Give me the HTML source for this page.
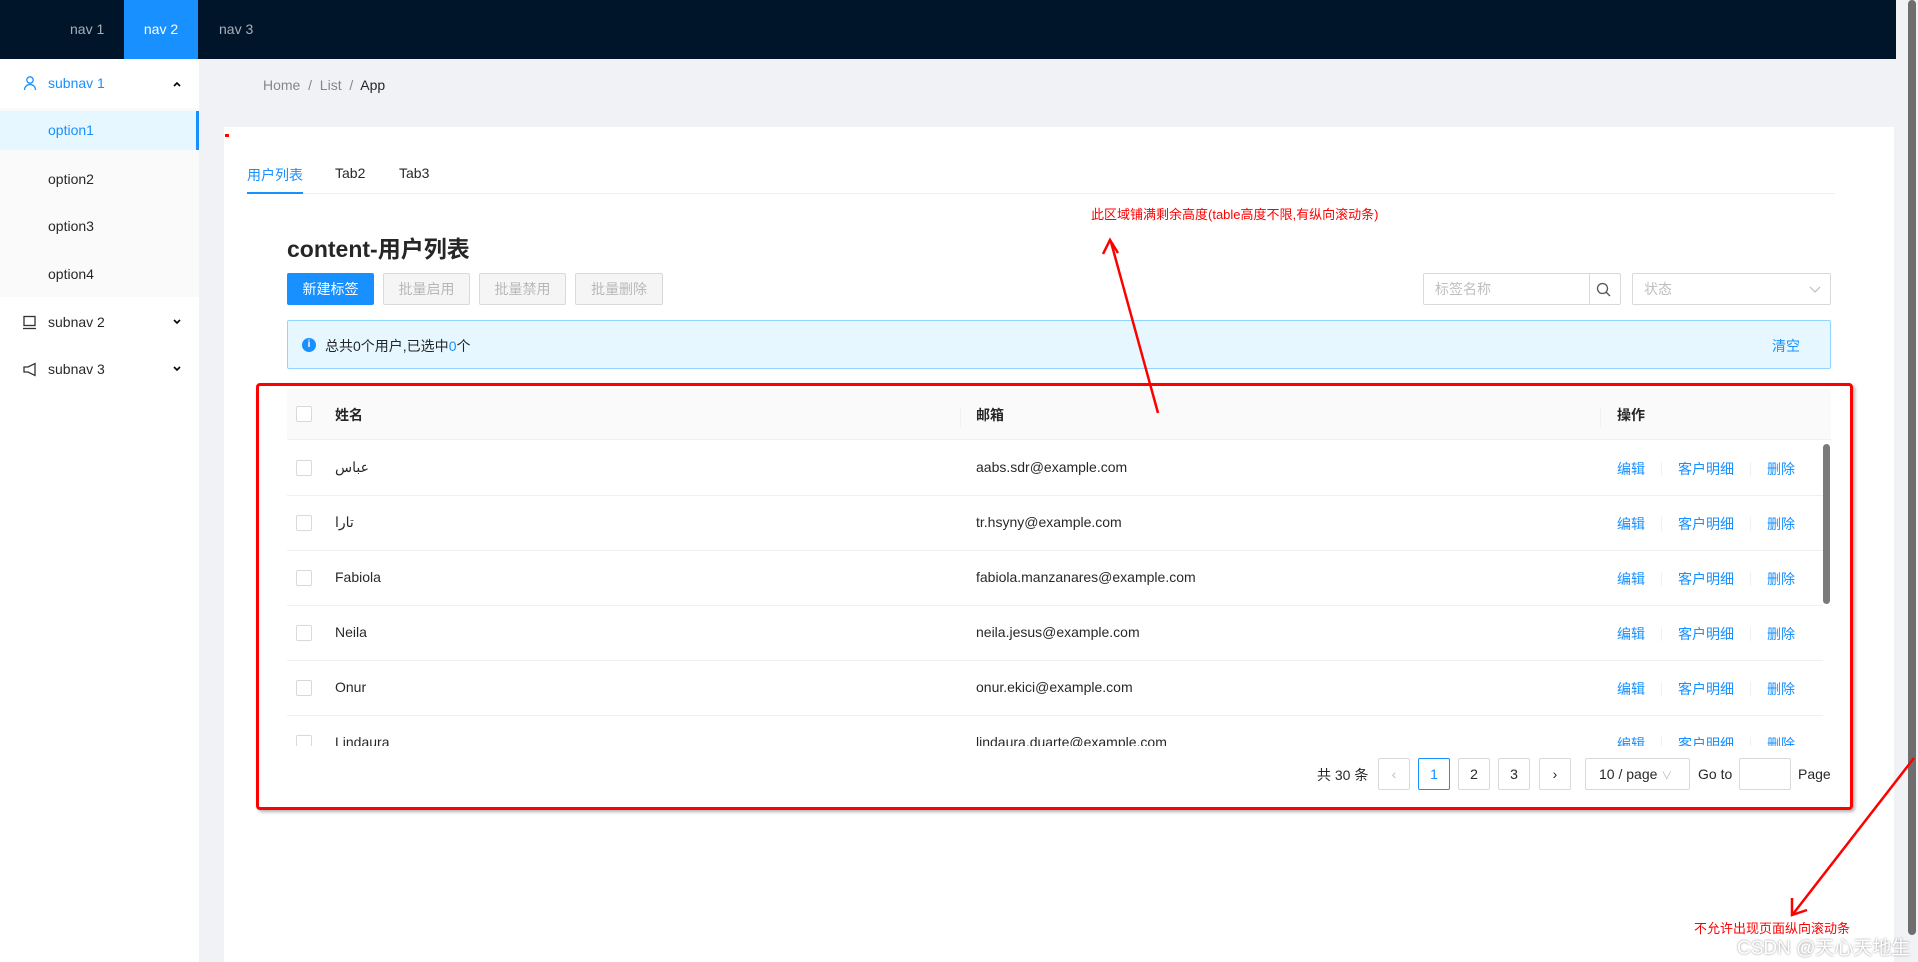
<!DOCTYPE html><html><head><meta charset="utf-8"><style>
*{box-sizing:border-box;margin:0;padding:0}
body{width:1918px;height:962px;overflow:hidden;position:relative;background:#f0f2f5;font-family:"Liberation Sans","Noto Sans CJK SC",sans-serif;font-size:14px;color:rgba(0,0,0,.85)}
.a{position:absolute}
.nav{left:0;top:0;width:1918px;height:59px;background:#001529}
.nav span{position:absolute;top:0;height:59px;line-height:59px;color:rgba(255,255,255,.65)}
.side{left:0;top:59px;width:199px;height:903px;background:#fff}
.mi{position:absolute;left:0;width:199px;height:48px;line-height:48px;padding-left:48px}
.btn{position:absolute;top:273px;height:32px;line-height:30px;text-align:center;border:1px solid #d9d9d9;background:#f5f5f5;color:rgba(0,0,0,.25);border-radius:2px}
.row{position:absolute;left:287px;width:1536px;height:55px;border-bottom:1px solid #f0f0f0}
.cb{position:absolute;left:9px;width:16px;height:16px;border:1px solid #d9d9d9;border-radius:2px;background:#fff}
.row span{position:absolute}
.lk{color:#1890ff}
.sep{position:absolute;width:1px;height:14px;background:#f0f0f0}
.pg{position:absolute;top:758px;height:32px;border:1px solid #d9d9d9;border-radius:2px;text-align:center;line-height:30px;background:#fff}
.red{color:#f00}
</style></head><body>
<div class="a nav"><span style="left:70px">nav 1</span><span style="left:124px;width:74px;background:#1890ff;color:#fff;text-align:center">nav 2</span><span style="left:219px">nav 3</span></div>
<div class="a side">
<div class="a" style="left:0;top:49px;width:199px;height:189px;background:#fafafa"></div>
<div class="mi" style="top:0;color:#1890ff">subnav 1</div>
<svg class="a" style="left:22px;top:16px" width="16" height="16" viewBox="0 0 16 16" fill="none" stroke="#1890ff" stroke-width="1.3"><circle cx="8" cy="5" r="3.2"/><path d="M2.5 15c0-3.5 2.5-5.5 5.5-5.5s5.5 2 5.5 5.5"/></svg>
<svg class="a" style="left:172px;top:21px" width="10" height="8" viewBox="0 0 10 8" fill="none" stroke="#000" stroke-width="1.6"><path d="M2 6l3-3 3 3"/></svg>
<div class="mi" style="top:52px;height:39px;line-height:39px;background:#e6f7ff;color:#1890ff;border-right:3px solid #1890ff">option1</div>
<div class="mi" style="top:100px;height:40px;line-height:40px">option2</div>
<div class="mi" style="top:147px;height:40px;line-height:40px">option3</div>
<div class="mi" style="top:195px;height:40px;line-height:40px">option4</div>
<div class="mi" style="top:239px">subnav 2</div>
<svg class="a" style="left:22px;top:256px" width="15" height="15" viewBox="0 0 15 15" fill="none" stroke="#333" stroke-width="1.3"><rect x="2" y="1.5" width="11" height="9"/><path d="M1 13.5h13"/></svg>
<svg class="a" style="left:172px;top:259px" width="10" height="8" viewBox="0 0 10 8" fill="none" stroke="#000" stroke-width="1.6"><path d="M2 2l3 3 3-3"/></svg>
<div class="mi" style="top:286px">subnav 3</div>
<svg class="a" style="left:22px;top:303px" width="15" height="15" viewBox="0 0 15 15" fill="none" stroke="#333" stroke-width="1.3"><path d="M13 1.5v12L6 10H2V5h4z"/></svg>
<svg class="a" style="left:172px;top:306px" width="10" height="8" viewBox="0 0 10 8" fill="none" stroke="#000" stroke-width="1.6"><path d="M2 2l3 3 3-3"/></svg>
</div>
<div class="a" style="left:263px;top:77px;color:rgba(0,0,0,.45)">Home &nbsp;/&nbsp; List &nbsp;/&nbsp; <span style="color:rgba(0,0,0,.85)">App</span></div>
<div class="a" style="left:224px;top:127px;width:1670px;height:835px;background:#fff"></div>
<div class="a" style="left:225px;top:134px;width:4px;height:3px;background:#f00"></div>
<div class="a" style="left:1896px;top:0;width:22px;height:962px;background:#f0f2f5"></div>
<div class="a" style="left:1908px;top:0;width:8px;height:935px;background:#6e6e6e;border-radius:4px"></div>
<div class="a" style="left:247px;top:165px;color:#1890ff">用户列表</div>
<div class="a" style="left:335px;top:165px">Tab2</div>
<div class="a" style="left:399px;top:165px">Tab3</div>
<div class="a" style="left:247px;top:193px;width:1588px;height:1px;background:#f0f0f0"></div>
<div class="a" style="left:247px;top:192px;width:56px;height:2px;background:#1890ff"></div>
<div class="a red" style="left:1091px;top:204px;font-size:13px">此区域铺满剩余高度(table高度不限,有纵向滚动条)</div>
<div class="a" style="left:287px;top:230px;font-size:23px;font-weight:bold">content-用户列表</div>
<div class="btn" style="left:287px;width:87px;background:#1890ff;border-color:#1890ff;color:#fff">新建标签</div>
<div class="btn" style="left:383px;width:87px">批量启用</div>
<div class="btn" style="left:479px;width:87px">批量禁用</div>
<div class="btn" style="left:575px;width:88px">批量删除</div>
<div class="a" style="left:1423px;top:273px;width:198px;height:32px;border:1px solid #d9d9d9;border-radius:2px;color:#bfbfbf;line-height:30px;padding-left:11px">标签名称<div class="a" style="left:165px;top:-1px;width:32px;height:32px;border-left:1px solid #d9d9d9"></div>
<svg class="a" style="left:172px;top:8px" width="15" height="15" viewBox="0 0 15 15" fill="none" stroke="#555" stroke-width="1.3"><circle cx="6.5" cy="6.5" r="5"/><path d="M10 10l4 4"/></svg></div>
<div class="a" style="left:1632px;top:273px;width:199px;height:32px;border:1px solid #d9d9d9;border-radius:2px;color:#bfbfbf;line-height:30px;padding-left:11px">状态
<svg class="a" style="left:176px;top:12px" width="12" height="8" viewBox="0 0 12 8" fill="none" stroke="#bfbfbf" stroke-width="1.2"><path d="M1 1l5 5 5-5"/></svg></div>
<div class="a" style="left:287px;top:320px;width:1544px;height:49px;background:#e6f7ff;border:1px solid #91d5ff;border-radius:2px"></div>
<div class="a" style="left:302px;top:338px;width:14px;height:14px;border-radius:50%;background:#1890ff;color:#fff;font-size:10px;line-height:14px;text-align:center;font-weight:bold">i</div>
<div class="a" style="left:325px;top:336px">总共0个用户,已选中<span style="color:#1890ff">0</span>个</div>
<div class="a lk" style="left:1772px;top:336px">清空</div>
<div class="a" style="left:256px;top:383px;width:1597px;height:427px;border:3px solid #f00;border-radius:4px;box-shadow:2px 2px 3px rgba(0,0,0,.3)"></div>
<div class="a" style="left:287px;top:389px;width:1544px;height:51px;background:#fafafa;border-bottom:1px solid #f0f0f0;font-weight:bold">
<div class="cb" style="top:17px"></div>
<span class="a" style="left:48px;top:16px">姓名</span>
<div class="sep" style="left:673px;top:18px;height:20px"></div>
<span class="a" style="left:689px;top:16px">邮箱</span>
<div class="sep" style="left:1313px;top:18px;height:20px"></div>
<span class="a" style="left:1330px;top:16px">操作</span></div>
<div class="a" style="left:287px;top:441px;width:1544px;height:305px;overflow:hidden">
<div class="row" style="left:0;top:0"><div class="cb" style="top:19px"></div><span style="left:48px;top:18px">عباس</span><span style="left:689px;top:18px">aabs.sdr@example.com</span><span class="lk" style="left:1330px;top:18px">编辑</span><div class="sep" style="left:1374px;top:21px"></div><span class="lk" style="left:1391px;top:18px">客户明细</span><div class="sep" style="left:1463px;top:21px"></div><span class="lk" style="left:1480px;top:18px">删除</span></div>
<div class="row" style="left:0;top:55px"><div class="cb" style="top:19px"></div><span style="left:48px;top:18px">تارا</span><span style="left:689px;top:18px">tr.hsyny@example.com</span><span class="lk" style="left:1330px;top:18px">编辑</span><div class="sep" style="left:1374px;top:21px"></div><span class="lk" style="left:1391px;top:18px">客户明细</span><div class="sep" style="left:1463px;top:21px"></div><span class="lk" style="left:1480px;top:18px">删除</span></div>
<div class="row" style="left:0;top:110px"><div class="cb" style="top:19px"></div><span style="left:48px;top:18px">Fabiola</span><span style="left:689px;top:18px">fabiola.manzanares@example.com</span><span class="lk" style="left:1330px;top:18px">编辑</span><div class="sep" style="left:1374px;top:21px"></div><span class="lk" style="left:1391px;top:18px">客户明细</span><div class="sep" style="left:1463px;top:21px"></div><span class="lk" style="left:1480px;top:18px">删除</span></div>
<div class="row" style="left:0;top:165px"><div class="cb" style="top:19px"></div><span style="left:48px;top:18px">Neila</span><span style="left:689px;top:18px">neila.jesus@example.com</span><span class="lk" style="left:1330px;top:18px">编辑</span><div class="sep" style="left:1374px;top:21px"></div><span class="lk" style="left:1391px;top:18px">客户明细</span><div class="sep" style="left:1463px;top:21px"></div><span class="lk" style="left:1480px;top:18px">删除</span></div>
<div class="row" style="left:0;top:220px"><div class="cb" style="top:19px"></div><span style="left:48px;top:18px">Onur</span><span style="left:689px;top:18px">onur.ekici@example.com</span><span class="lk" style="left:1330px;top:18px">编辑</span><div class="sep" style="left:1374px;top:21px"></div><span class="lk" style="left:1391px;top:18px">客户明细</span><div class="sep" style="left:1463px;top:21px"></div><span class="lk" style="left:1480px;top:18px">删除</span></div>
<div class="row" style="left:0;top:275px"><div class="cb" style="top:19px"></div><span style="left:48px;top:18px">Lindaura</span><span style="left:689px;top:18px">lindaura.duarte@example.com</span><span class="lk" style="left:1330px;top:18px">编辑</span><div class="sep" style="left:1374px;top:21px"></div><span class="lk" style="left:1391px;top:18px">客户明细</span><div class="sep" style="left:1463px;top:21px"></div><span class="lk" style="left:1480px;top:18px">删除</span></div>
<div class="a" style="left:1536px;top:3px;width:7px;height:160px;background:#7a7a7a;border-radius:4px"></div>
</div>
<div class="a" style="left:1317px;top:765px">共 30 条</div>
<div class="pg" style="left:1378px;width:32px;color:#bfbfbf">&lsaquo;</div>
<div class="pg" style="left:1418px;width:32px;border-color:#1890ff;color:#1890ff">1</div>
<div class="pg" style="left:1458px;width:32px">2</div>
<div class="pg" style="left:1498px;width:32px">3</div>
<div class="pg" style="left:1539px;width:32px">&rsaquo;</div>
<div class="pg" style="left:1585px;width:105px;text-align:left;padding-left:13px">10 / page <span style="color:#bfbfbf;font-size:11px">&#8744;</span></div>
<div class="a" style="left:1698px;top:766px">Go to</div>
<div class="pg" style="left:1739px;width:52px"></div>
<div class="a" style="left:1798px;top:766px">Page</div>
<svg class="a" style="left:0;top:0" width="1918" height="962"><g stroke="#f00" stroke-width="2.5" fill="none"><path d="M1158 413L1111 242"/><path d="M1103 254l7-14 8 13"/><path d="M1914 758L1793 914"/><path d="M1792 898l0 17 15-5"/></g></svg>
<div class="a red" style="left:1694px;top:918px;font-size:13px">不允许出现页面纵向滚动条</div>
<div class="a" style="left:1737px;top:933px;font-size:19px;color:#fff;text-shadow:0 0 2px #888">CSDN @天心天地生</div>
</body></html>
